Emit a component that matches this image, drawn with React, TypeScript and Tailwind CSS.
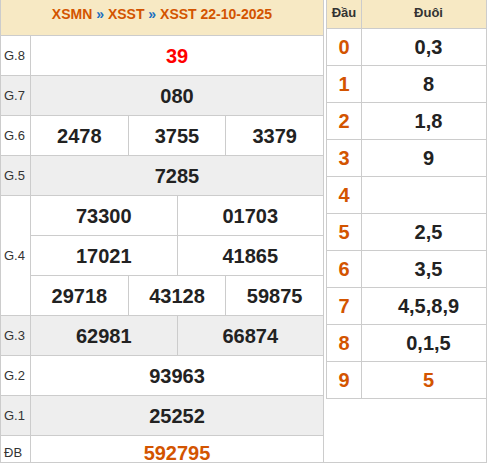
import React from "react";

type RowProps = { label: string; nums: string[]; gray?: boolean; kind?: "red" | "orange" | "normal" };

function Cells({ nums, kind }: { nums: string[]; kind?: "red" | "orange" | "normal" }) {
  return (
    <div className="flex flex-1 h-full">
      {nums.map((n, i) => (
        <div
          key={i}
          className={
            "flex-1 flex items-center justify-center font-bold " +
            (i > 0 ? "border-l border-[#ccc] " : "") +
            (kind === "red"
              ? "text-[20px] text-[#ff0000]"
              : kind === "orange"
              ? "text-[20px] text-[#d35400] pb-[6px]"
              : "text-[20px] text-[#222]")
          }
        >
          {n}
        </div>
      ))}
    </div>
  );
}

function Row({ label, nums, gray, kind }: RowProps) {
  return (
    <div className={"flex h-[40px] shrink-0 border-b border-[#ccc] " + (gray ? "bg-[#eeeeee]" : "bg-white")}>
      <div
        className={
          "w-[30px] shrink-0 border-r border-[#ccc] pl-[3px] flex items-center text-[13px] text-[#333] " +
          (kind === "orange" ? "pb-[6px]" : "")
        }
      >
        {label}
      </div>
      <Cells nums={nums} kind={kind} />
    </div>
  );
}

const loto: [string, string][] = [
  ["0", "0,3"],
  ["1", "8"],
  ["2", "1,8"],
  ["3", "9"],
  ["4", ""],
  ["5", "2,5"],
  ["6", "3,5"],
  ["7", "4,5,8,9"],
  ["8", "0,1,5"],
  ["9", "5"],
];

export default function App() {
  return (
    <div className="w-[487px] h-[463px] flex gap-[2px] border-r border-b border-[#ccc] overflow-hidden bg-white font-['Liberation_Sans',Arial,sans-serif]">
      <div className="w-[324px] shrink-0 flex flex-col border-l border-r border-[#ccc]">
        <div className="h-[36px] shrink-0 border-b border-[#ccc] bg-[#f7e9c4] flex justify-center pt-[6px] text-[14px] leading-[16px] font-bold text-[#d35400]">
          <span>
            XSMN <span className="text-[#1a6fc0]">»</span> XSST <span className="text-[#1a6fc0]">»</span> XSST 22-10-2025
          </span>
        </div>
        <Row label="G.8" nums={["39"]} kind="red" />
        <Row label="G.7" nums={["080"]} gray />
        <Row label="G.6" nums={["2478", "3755", "3379"]} />
        <Row label="G.5" nums={["7285"]} gray />
        <div className="flex h-[120px] shrink-0 border-b border-[#ccc] bg-white">
          <div className="w-[30px] shrink-0 border-r border-[#ccc] pl-[3px] flex items-center text-[13px] text-[#333]">
            G.4
          </div>
          <div className="flex-1 flex flex-col">
            <div className="h-[40px] shrink-0 border-b border-[#ccc] flex">
              <Cells nums={["73300", "01703"]} />
            </div>
            <div className="h-[40px] shrink-0 border-b border-[#ccc] flex">
              <Cells nums={["17021", "41865"]} />
            </div>
            <div className="flex-1 flex">
              <Cells nums={["29718", "43128", "59875"]} />
            </div>
          </div>
        </div>
        <Row label="G.3" nums={["62981", "66874"]} gray />
        <Row label="G.2" nums={["93963"]} />
        <Row label="G.1" nums={["25252"]} gray />
        <Row label="ĐB" nums={["592795"]} kind="orange" />
      </div>
      <div className="flex-1 self-start flex flex-col border-l border-[#ccc]">
        <div className="h-[29px] flex border-b border-[#ccc] bg-[#f7e9c4] text-[13px] leading-[16px] font-bold text-[#333]">
          <div className="w-[35px] shrink-0 border-r border-[#ccc] flex justify-center pt-[5px]">Đầu</div>
          <div className="flex-1 flex justify-center pt-[5px] pl-[9px]">Đuôi</div>
        </div>
        {loto.map(([d, t]) => (
          <div key={d} className="h-[37px] flex border-b border-[#ccc] text-[20px] font-bold">
            <div className="w-[35px] shrink-0 border-r border-[#ccc] flex items-center justify-center text-[#d35400]">
              {d}
            </div>
            <div
              className={
                "flex-1 flex items-center justify-center pl-[9px] " + (d === "9" ? "text-[#d35400]" : "text-[#222]")
              }
            >
              {t}
            </div>
          </div>
        ))}
      </div>
    </div>
  );
}
